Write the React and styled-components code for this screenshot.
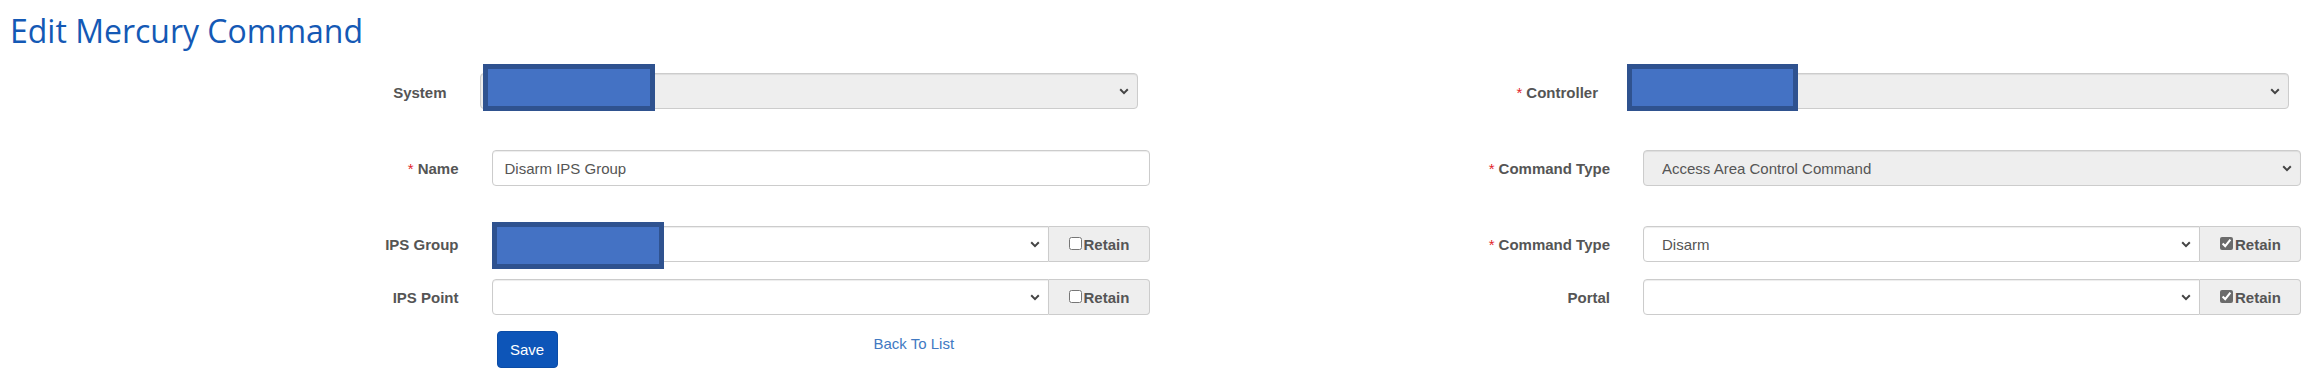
import React from "react";
import styled, { createGlobalStyle } from "styled-components";

const GlobalStyle = createGlobalStyle`
  html, body { margin: 0; padding: 0; background: #fff; }
  body {
    font-family: "Liberation Sans", Arial, sans-serif;
    font-size: 15px;
    color: #555;
  }
  *, *::before, *::after { box-sizing: border-box; }
`;

const Page = styled.div`
  width: 2323px;
  height: 384px;
  overflow: hidden;
  padding-top: 9px;
`;

const Title = styled.h2`
  margin: 0;
  padding-left: 10px;
  font-family: "Open Sans", sans-serif;
  font-weight: 400;
  font-size: 32px;
  line-height: 44px;
  color: #1459b5;
`;

const Form = styled.form`
  display: grid;
  grid-template-columns: 1fr 1fr;
  margin-top: 20px;
`;

const Column = styled.div`
  display: flex;
  flex-direction: column;
`;

const Row = styled.div`
  display: grid;
  grid-template-columns: 1fr 658px;
  column-gap: 33px;
  align-items: center;
  height: 36px;
  margin-top: ${(p) => p.$gap || 0}px;
  padding-right: ${(p) => p.$inset}px;
`;

const ActionRow = styled(Row)`
  align-items: start;
  height: 37px;
`;

const Label = styled.label`
  text-align: right;
  font-weight: 700;
  color: #555;
  white-space: nowrap;
  padding-top: ${(p) => p.$drop || 0}px;
`;

const Required = styled.span`
  color: #e3242b;
  font-weight: 400;
  margin-right: 4px;
`;

const Field = styled.div`
  position: relative;
  display: flex;
  height: 36px;
`;

const SelectWrap = styled.div`
  position: relative;
  flex: 1;
  min-width: 0;
  display: flex;
`;

const Select = styled.select`
  appearance: none;
  -webkit-appearance: none;
  flex: 1;
  min-width: 0;
  height: 36px;
  margin: 0;
  border: 1px solid #ccc;
  border-radius: ${(p) => (p.$attached ? "4px 0 0 4px" : "4px")};
  background: ${(p) => (p.disabled ? "#eee" : "#fff")};
  box-shadow: inset 0 1px 1px rgba(0, 0, 0, 0.075);
  color: #555;
  opacity: 1;
  font: 15px "Liberation Sans", Arial, sans-serif;
  padding: 0 30px 0 18px;
  outline: none;
`;

const Chevron = styled.svg`
  position: absolute;
  right: 9px;
  top: 15px;
  width: 10px;
  height: 7px;
  pointer-events: none;
`;

const TextInput = styled.input`
  width: 100%;
  height: 36px;
  margin: 0;
  border: 1px solid #ccc;
  border-radius: 4px;
  background: #fff;
  box-shadow: inset 0 1px 1px rgba(0, 0, 0, 0.075);
  color: #555;
  font: 15px "Liberation Sans", Arial, sans-serif;
  padding: 0 12px;
  outline: none;
`;

const Addon = styled.label`
  display: flex;
  align-items: center;
  width: 101px;
  height: 36px;
  padding-left: 20px;
  border: 1px solid #ccc;
  border-left: 0;
  border-radius: 0 4px 4px 0;
  background: #eee;
  font-weight: 700;
  color: #555;
`;

const Check = styled.input`
  width: 13px;
  height: 13px;
  margin: 0 2px 2px 0;
  accent-color: #6b6b6b;
`;

const Redaction = styled.div`
  position: absolute;
  left: ${(p) => p.$x}px;
  top: ${(p) => p.$y}px;
  width: ${(p) => p.$w}px;
  height: 47px;
  background: #4472c4;
  border: 5px solid #2f528f;
  z-index: 2;
`;

const Actions = styled.div`
  display: flex;
  align-items: flex-start;
`;

const SaveButton = styled.button`
  width: 61px;
  height: 37px;
  margin: 0 0 0 5px;
  padding: 0;
  background: #0d55b8;
  color: #fff;
  border: 1px solid #0b4ca6;
  border-radius: 4px;
  font: 15px "Liberation Sans", Arial, sans-serif;
`;

const BackLink = styled.a`
  margin-left: 316px;
  padding-top: 3px;
  line-height: 20px;
  color: #4179c2;
  text-decoration: none;
  font-size: 15px;
`;

function ChevronIcon() {
  return (
    <Chevron viewBox="0 0 10 7" aria-hidden="true">
      <path d="M1.2 1.3 L5 5.1 L8.8 1.3" fill="none" stroke="#444" strokeWidth="2" />
    </Chevron>
  );
}

function SelectField({ value, disabled, retain, checked, redact }) {
  return (
    <Field>
      {redact && <Redaction $x={redact.x} $y={redact.y} $w={redact.w} />}
      <SelectWrap>
        <Select disabled={disabled} $attached={retain} defaultValue={value || ""}>
          <option value={value || ""}>{value || ""}</option>
        </Select>
        <ChevronIcon />
      </SelectWrap>
      {retain && (
        <Addon>
          <Check type="checkbox" defaultChecked={checked} />
          Retain
        </Addon>
      )}
    </Field>
  );
}

function FieldLabel({ required, children, drop }) {
  return (
    <Label $drop={drop}>
      {required && <Required>*</Required>}
      {children}
    </Label>
  );
}

export default function App() {
  return (
    <Page>
      <GlobalStyle />
      <Title>Edit Mercury Command</Title>
      <Form onSubmit={(e) => e.preventDefault()}>
        <Column>
          <Row $inset={24}>
            <FieldLabel drop={2}>System</FieldLabel>
            <SelectField disabled redact={{ x: 3, y: -9, w: 172 }} />
          </Row>
          <Row $inset={12} $gap={41}>
            <FieldLabel required>Name</FieldLabel>
            <Field>
              <TextInput type="text" defaultValue="Disarm IPS Group" />
            </Field>
          </Row>
          <Row $inset={12} $gap={40}>
            <FieldLabel drop={1}>IPS Group</FieldLabel>
            <SelectField retain redact={{ x: 0, y: -4, w: 172 }} />
          </Row>
          <Row $inset={12} $gap={17}>
            <FieldLabel drop={1}>IPS Point</FieldLabel>
            <SelectField retain />
          </Row>
          <ActionRow $inset={12} $gap={16}>
            <span />
            <Actions>
              <SaveButton type="submit">Save</SaveButton>
              <BackLink href="#">Back To List</BackLink>
            </Actions>
          </ActionRow>
        </Column>
        <Column>
          <Row $inset={34}>
            <FieldLabel required drop={2}>Controller</FieldLabel>
            <SelectField disabled redact={{ x: -4, y: -9, w: 171 }} />
          </Row>
          <Row $inset={22} $gap={41}>
            <FieldLabel required>Command Type</FieldLabel>
            <SelectField disabled value="Access Area Control Command" />
          </Row>
          <Row $inset={22} $gap={40}>
            <FieldLabel required drop={1}>Command Type</FieldLabel>
            <SelectField retain checked value="Disarm" />
          </Row>
          <Row $inset={22} $gap={17}>
            <FieldLabel drop={1}>Portal</FieldLabel>
            <SelectField retain checked />
          </Row>
        </Column>
      </Form>
    </Page>
  );
}
